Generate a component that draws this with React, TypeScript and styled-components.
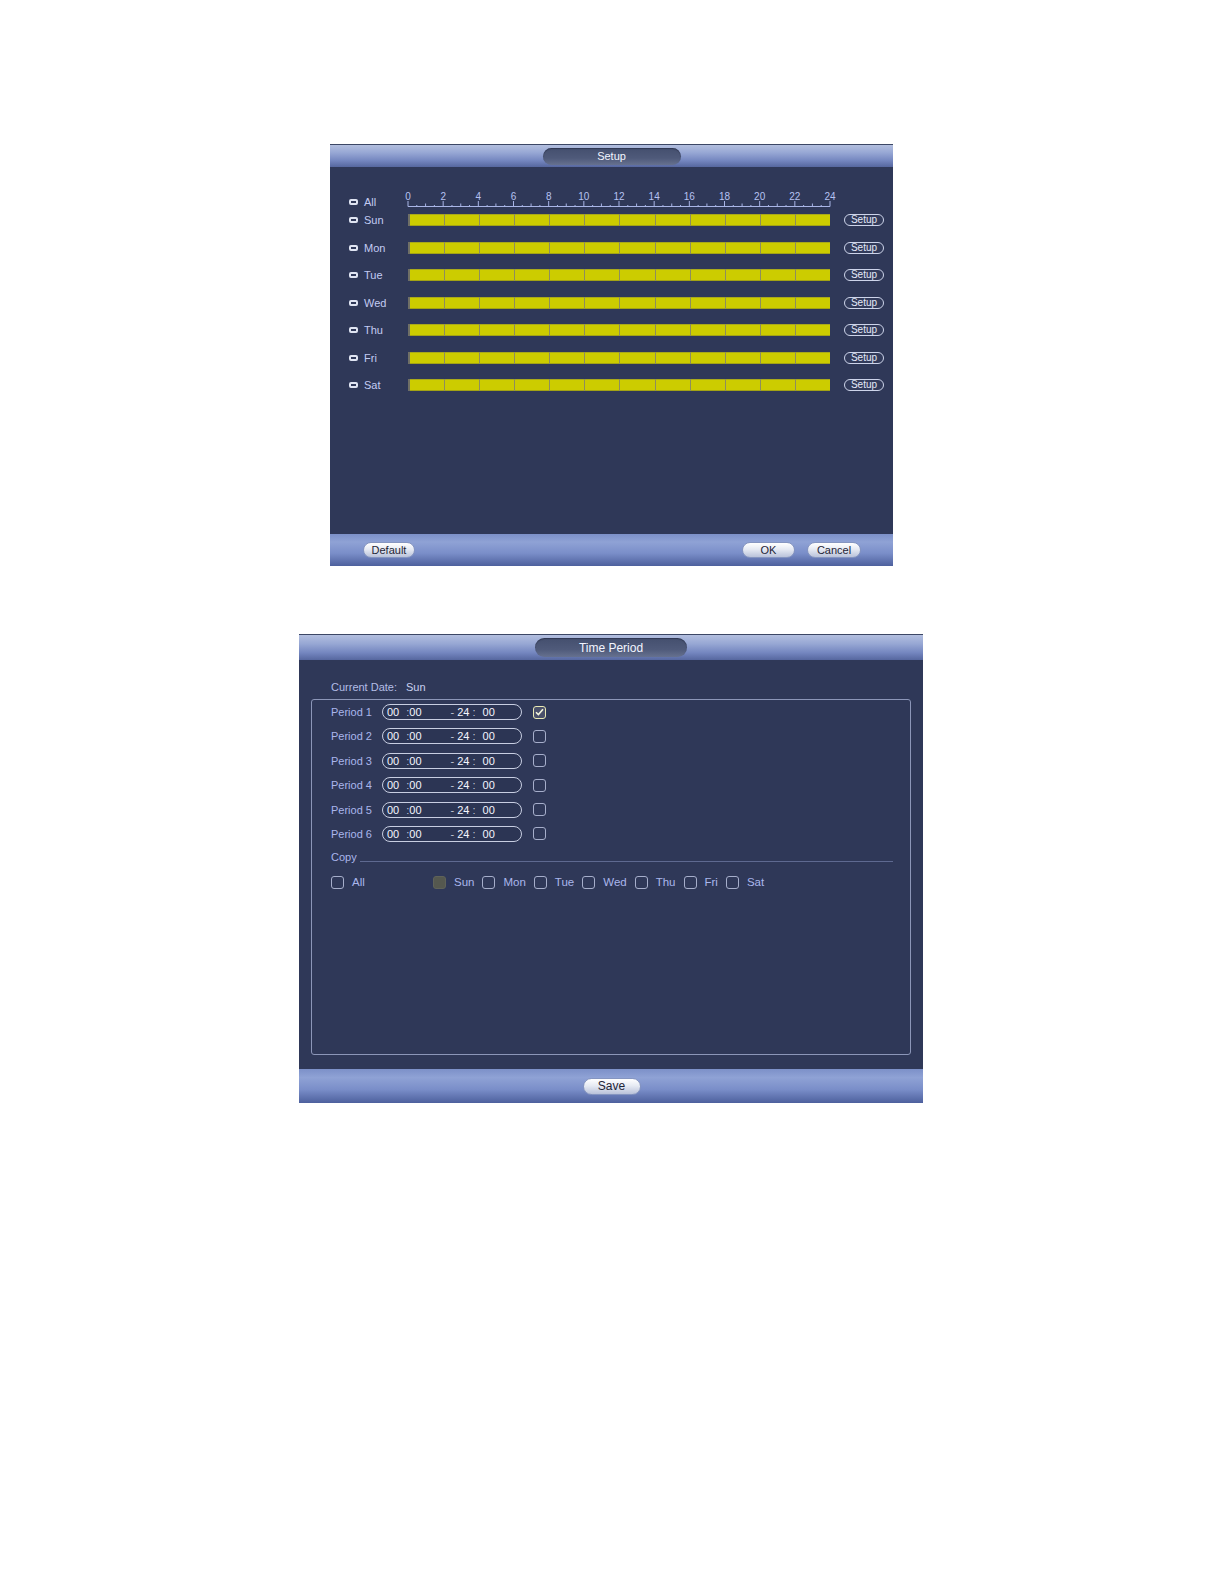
import React from "react";
import styled, { createGlobalStyle } from "styled-components";

const GlobalStyle = createGlobalStyle`
  html, body { margin: 0; padding: 0; background: #ffffff; }
  body { font-family: "Liberation Sans", Arial, sans-serif; }
  * { box-sizing: border-box; }
`;

const Page = styled.div`
  width: 1224px;
  min-height: 1584px;
  display: flex;
  flex-direction: column;
  align-items: flex-start;
  padding-top: 144px;
`;

const Window = styled.div<{ $left: number; $width: number; $height: number; $mt?: number }>`
  margin-left: ${(p) => p.$left}px;
  margin-top: ${(p) => p.$mt ?? 0}px;
  width: ${(p) => p.$width}px;
  height: ${(p) => p.$height}px;
  display: flex;
  flex-direction: column;
  background: #2f3858;
`;

const TitleBar = styled.div<{ $h: number }>`
  height: ${(p) => p.$h}px;
  flex: none;
  display: flex;
  align-items: center;
  justify-content: center;
  border-top: 1px solid #3c4765;
  background: linear-gradient(
    to bottom,
    #b3bfdf 0%,
    #97a7d4 35%,
    #7587c0 70%,
    #56679f 100%
  );
`;

const TitlePill = styled.div<{ $w: number; $h: number; $fs: number }>`
  width: ${(p) => p.$w}px;
  height: ${(p) => p.$h}px;
  border-radius: ${(p) => p.$h / 2}px;
  background: linear-gradient(to bottom, #444f6e 0%, #4f5a7a 60%, #66718f 100%);
  box-shadow: inset 0 1px 1px rgba(20, 25, 45, 0.45);
  color: #f2f5ff;
  font-size: ${(p) => p.$fs}px;
  display: flex;
  align-items: center;
  justify-content: center;
`;

const FooterBar = styled.div<{ $h: number; $center?: boolean }>`
  height: ${(p) => p.$h}px;
  flex: none;
  display: flex;
  align-items: center;
  justify-content: ${(p) => (p.$center ? "center" : "flex-start")};
  padding: 0 32px 0 33px;
  gap: 12px;
  background: linear-gradient(
    to bottom,
    #7c90c8 0%,
    #8fa2d5 25%,
    #7a8ec9 60%,
    #4d609d 100%
  );
`;

const Spacer = styled.div`
  flex: 1;
`;

const PillButton = styled.div<{ $w: number; $h: number; $fs: number }>`
  width: ${(p) => p.$w}px;
  height: ${(p) => p.$h}px;
  border-radius: ${(p) => p.$h / 2}px;
  background: linear-gradient(to bottom, #ffffff 0%, #e6eaf3 45%, #b9c2da 100%);
  border: 1px solid #8595c0;
  color: #1f2536;
  font-size: ${(p) => p.$fs}px;
  display: flex;
  align-items: center;
  justify-content: center;
`;

/* ---------- Schedule window ---------- */

const ScheduleBody = styled.div`
  flex: 1;
  padding: 23px 9px 0 19px;
  display: flex;
  flex-direction: column;
`;

const RulerRow = styled.div`
  display: flex;
  align-items: flex-end;
  height: 18px;
  margin-bottom: 6px;
`;

const DayList = styled.div`
  display: flex;
  flex-direction: column;
  gap: 15.5px;
`;

const DayRow = styled.div`
  display: flex;
  align-items: center;
  height: 12px;
`;

const DayCell = styled.div`
  width: 59px;
  height: 12px;
  flex: none;
  display: flex;
  align-items: center;
`;

const MiniBox = styled.span`
  width: 9px;
  height: 6px;
  border: 2px solid #dfe4f2;
  border-radius: 2px;
  background: #2f3858;
  margin-right: 6px;
  flex: none;
`;

const DayLabel = styled.span`
  font-size: 11px;
  color: #c3cbf3;
  line-height: 12px;
`;

const Ruler = styled.svg`
  width: 422px;
  height: 18px;
  overflow: visible;
  display: block;
  flex: none;
`;

const Bar = styled.div`
  width: 422px;
  height: 12px;
  flex: none;
  display: flex;
  box-shadow: inset 0 1px 0 #9c9c30, inset 0 -1px 0 #8a8a28;
`;

const Segment = styled.div<{ $first?: boolean }>`
  flex: 1;
  background: #cccc00;
  border-left: ${(p) => (p.$first ? "2px solid #6f6f66" : "1px solid #8d8d5e")};
  box-shadow: inset 0 1px 0 #a9a91a, inset 0 -1px 0 #a3a314;
`;

const SetupButton = styled.div`
  margin-left: 14px;
  width: 40px;
  height: 12px;
  border: 1px solid #cdd4ea;
  border-radius: 6px;
  color: #e3e8f8;
  font-size: 10px;
  line-height: 10px;
  display: flex;
  align-items: center;
  justify-content: center;
  background: #323b5b;
`;

/* ---------- Time period window ---------- */

const PeriodBody = styled.div`
  flex: 1;
  padding: 0 12px 14px 12px;
  display: flex;
  flex-direction: column;
`;

const DateRow = styled.div`
  margin-top: 20px;
  margin-bottom: 5px;
  height: 14px;
  padding-left: 20px;
  display: flex;
  align-items: center;
`;

const Label = styled.span<{ $w?: number; $fs?: number; $color?: string }>`
  width: ${(p) => (p.$w ? `${p.$w}px` : "auto")};
  flex: none;
  font-size: ${(p) => p.$fs ?? 11}px;
  color: ${(p) => p.$color ?? "#aab6ec"};
  white-space: nowrap;
`;

const Frame = styled.div`
  flex: 1;
  border: 1px solid #8c96b8;
  border-radius: 3px;
  padding: 4px 17px 0 19px;
  display: flex;
  flex-direction: column;
`;

const PeriodList = styled.div`
  display: flex;
  flex-direction: column;
  gap: 8.4px;
`;

const PeriodRow = styled.div`
  display: flex;
  align-items: center;
  height: 16px;
`;

const TimeField = styled.div`
  width: 140px;
  height: 16px;
  border: 1px solid #c8cee2;
  border-radius: 8px;
  padding-left: 4px;
  display: flex;
  align-items: center;
  flex: none;
  background: #2c3554;
`;

const Part = styled.span<{ $ml?: number; $dim?: boolean }>`
  margin-left: ${(p) => p.$ml ?? 0}px;
  font-size: 11px;
  color: ${(p) => (p.$dim ? "#c2c7d8" : "#f4f6ff")};
  line-height: 14px;
`;

const Box = styled.span<{ $ml?: number; $state?: "on" | "off" | "disabled" }>`
  width: 13px;
  height: 13px;
  flex: none;
  margin-left: ${(p) => p.$ml ?? 0}px;
  border-radius: 3px;
  display: flex;
  align-items: center;
  justify-content: center;
  border: 1px solid
    ${(p) =>
      p.$state === "on" ? "#e8e8b4" : p.$state === "disabled" ? "#5f6259" : "#a6aecb"};
  background: ${(p) =>
    p.$state === "on" ? "#4a506a" : p.$state === "disabled" ? "#55584f" : "#2f3858"};
`;

const CopyHeader = styled.div`
  display: flex;
  align-items: center;
  height: 14px;
  margin-top: 8px;
`;

const Rule = styled.div`
  flex: 1;
  height: 1px;
  align-self: flex-end;
  margin: 0 0 2px 3px;
  background: #5e6990;
`;

const CopyRow = styled.div`
  display: flex;
  align-items: center;
  height: 13px;
  margin-top: 12px;
  gap: 8px;
`;

const CheckItem = styled.div<{ $w?: number }>`
  display: flex;
  align-items: center;
  gap: 8px;
  width: ${(p) => (p.$w ? `${p.$w}px` : "auto")};
  flex: none;
`;

const days = ["Sun", "Mon", "Tue", "Wed", "Thu", "Fri", "Sat"];

function RulerGraphic() {
  const W = 422;
  const ticks = [];
  for (let i = 0; i <= 48; i++) {
    const x = (i * W) / 48;
    const y1 = i % 4 === 0 ? 11 : i % 2 === 0 ? 13.5 : 15;
    ticks.push(
      <line key={`t${i}`} x1={x} x2={x} y1={y1} y2={16.5} stroke="#a9b5e6" strokeWidth={1} />
    );
  }
  const labels = [];
  for (let h = 0; h <= 24; h += 2) {
    labels.push(
      <text
        key={`l${h}`}
        x={(h * W) / 24}
        y={10}
        textAnchor="middle"
        fontSize={10}
        fill="#b6c2f2"
        fontFamily="Liberation Sans, Arial, sans-serif"
      >
        {h}
      </text>
    );
  }
  return (
    <Ruler viewBox={`0 0 ${W} 18`}>
      <line x1={0} x2={W} y1={16.5} y2={16.5} stroke="#a9b5e6" strokeWidth={1} />
      {ticks}
      {labels}
    </Ruler>
  );
}

function Check() {
  return (
    <svg width="9" height="8" viewBox="0 0 9 8">
      <path d="M1 4.2 L3.4 6.6 L8 1.2" fill="none" stroke="#f4f4dc" strokeWidth="1.6" />
    </svg>
  );
}

export default function App() {
  return (
    <>
      <GlobalStyle />
      <Page>
        <Window $left={330} $width={563} $height={422}>
          <TitleBar $h={23}>
            <TitlePill $w={138} $h={17} $fs={11}>
              Setup
            </TitlePill>
          </TitleBar>
          <ScheduleBody>
            <RulerRow>
              <DayCell>
                <MiniBox />
                <DayLabel>All</DayLabel>
              </DayCell>
              <RulerGraphic />
            </RulerRow>
            <DayList>
              {days.map((d) => (
                <DayRow key={d}>
                  <DayCell>
                    <MiniBox />
                    <DayLabel>{d}</DayLabel>
                  </DayCell>
                  <Bar>
                    {Array.from({ length: 12 }).map((_, i) => (
                      <Segment key={i} $first={i === 0} />
                    ))}
                  </Bar>
                  <SetupButton>Setup</SetupButton>
                </DayRow>
              ))}
            </DayList>
          </ScheduleBody>
          <FooterBar $h={32}>
            <PillButton $w={52} $h={16} $fs={11}>
              Default
            </PillButton>
            <Spacer />
            <PillButton $w={53} $h={16} $fs={11}>
              OK
            </PillButton>
            <PillButton $w={54} $h={16} $fs={11}>
              Cancel
            </PillButton>
          </FooterBar>
        </Window>

        <Window $left={299} $width={624} $height={469} $mt={68}>
          <TitleBar $h={26}>
            <TitlePill $w={152} $h={19} $fs={12}>
              Time Period
            </TitlePill>
          </TitleBar>
          <PeriodBody>
            <DateRow>
              <Label $w={75} $color="#b3bde6">
                Current Date:
              </Label>
              <Label $color="#c9d0f0">Sun</Label>
            </DateRow>
            <Frame>
              <PeriodList>
                {[1, 2, 3, 4, 5, 6].map((n) => (
                  <PeriodRow key={n}>
                    <Label $w={51}>Period {n}</Label>
                    <TimeField>
                      <Part>00</Part>
                      <Part $ml={7} $dim>
                        :
                      </Part>
                      <Part>00</Part>
                      <Part $ml={29} $dim>
                        -
                      </Part>
                      <Part $ml={3}>24</Part>
                      <Part $ml={3} $dim>
                        :
                      </Part>
                      <Part $ml={7}>00</Part>
                    </TimeField>
                    <Box $ml={11} $state={n === 1 ? "on" : "off"}>
                      {n === 1 ? <Check /> : null}
                    </Box>
                  </PeriodRow>
                ))}
              </PeriodList>
              <CopyHeader>
                <Label>Copy</Label>
                <Rule />
              </CopyHeader>
              <CopyRow>
                <CheckItem $w={94}>
                  <Box $state="off" />
                  <Label $fs={11.5}>All</Label>
                </CheckItem>
                {days.map((d) => (
                  <CheckItem key={d}>
                    <Box $state={d === "Sun" ? "disabled" : "off"} />
                    <Label $fs={11.5}>{d}</Label>
                  </CheckItem>
                ))}
              </CopyRow>
            </Frame>
          </PeriodBody>
          <FooterBar $h={34} $center>
            <PillButton $w={58} $h={17} $fs={12}>
              Save
            </PillButton>
          </FooterBar>
        </Window>
      </Page>
    </>
  );
}
